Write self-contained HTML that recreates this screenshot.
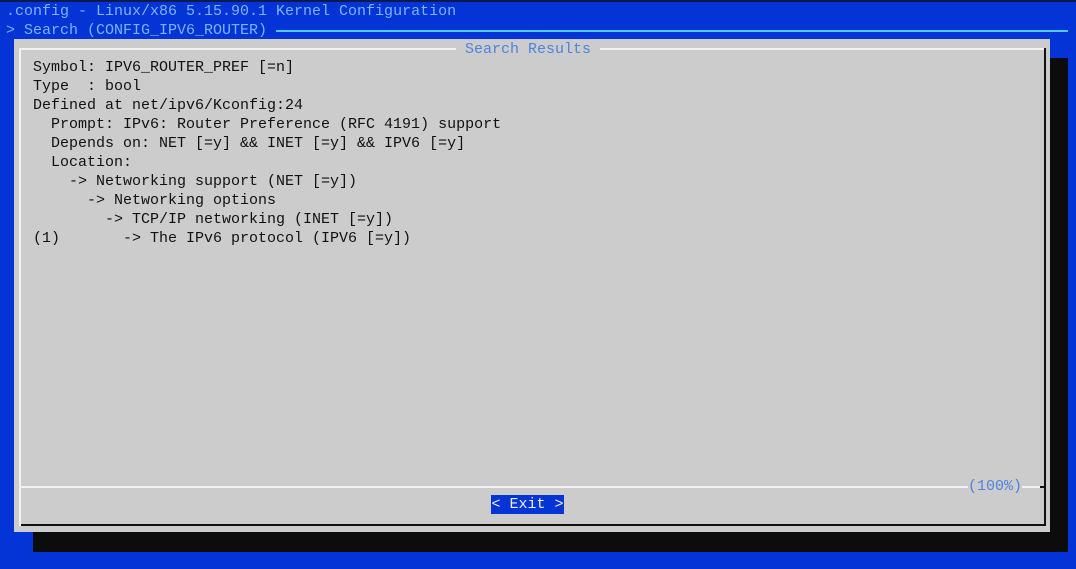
<!DOCTYPE html>
<html><head><style>
body{margin:0;width:1076px;height:569px;background:#0433d6;position:relative;overflow:hidden;font-family:"Liberation Mono",monospace;font-size:15px;}
.a{position:absolute;}
pre{margin:0;font-family:inherit;font-size:15px;line-height:19px;white-space:pre;}
</style></head><body>
<div class="a" style="left:0;top:0;width:1076px;height:2px;background:#0a1a50"></div>
<pre class="a" style="left:6px;top:2px;color:#7fb2ff">.config - Linux/x86 5.15.90.1 Kernel Configuration</pre>
<pre class="a" style="left:6px;top:21px;color:#7fb2ff">&gt; Search (CONFIG_IPV6_ROUTER)</pre>
<div class="a" style="left:276px;top:30px;width:792px;height:2px;background:#4fc8f4"></div>
<div class="a" style="left:33px;top:58px;width:1035px;height:494px;background:#0c0c0c"></div>
<div class="a" style="left:14px;top:39px;width:1036px;height:493px;background:#cccccc"></div>
<div class="a" style="left:19px;top:48px;width:2px;height:478px;background:#f2f2f2"></div>
<div class="a" style="left:19px;top:48px;width:1025px;height:2px;background:#f2f2f2"></div>
<div class="a" style="left:1044px;top:48px;width:2px;height:478px;background:#111"></div>
<div class="a" style="left:21px;top:524px;width:1025px;height:2px;background:#111"></div>
<div class="a" style="left:21px;top:486px;width:1023px;height:2px;background:#f2f2f2"></div>
<div class="a" style="left:1040px;top:486px;width:6px;height:2px;background:#111"></div>
<pre class="a" style="left:456px;top:40px;background:#cccccc;color:#4f82e0;padding:0 9px">Search Results</pre>
<pre class="a" style="left:968px;top:477px;background:#cccccc;color:#4f82e0">(100%)</pre>
<pre class="a" style="left:33px;top:58px;color:#111">Symbol: IPV6_ROUTER_PREF [=n]
Type  : bool
Defined at net/ipv6/Kconfig:24
  Prompt: IPv6: Router Preference (RFC 4191) support
  Depends on: NET [=y] &amp;&amp; INET [=y] &amp;&amp; IPV6 [=y]
  Location:
    -&gt; Networking support (NET [=y])
      -&gt; Networking options
        -&gt; TCP/IP networking (INET [=y])
(1)       -&gt; The IPv6 protocol (IPV6 [=y])</pre>
<pre class="a" style="left:491px;top:495px;width:73px;height:19px;background:#0433d6;color:#f0f0f0;text-align:center">&lt; Exit &gt;</pre>
</body></html>
